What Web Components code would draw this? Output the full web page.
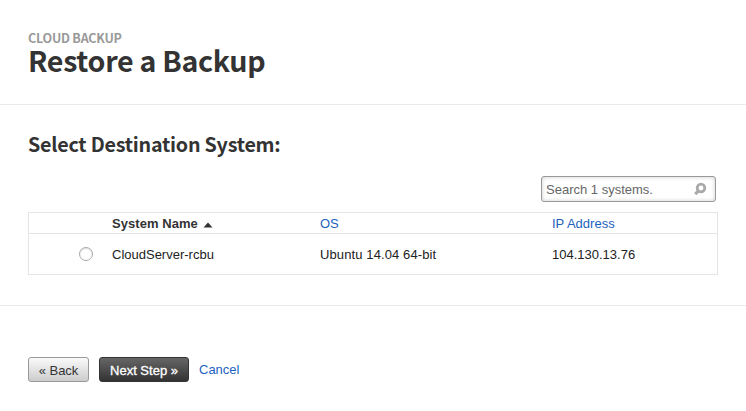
<!DOCTYPE html>
<html lang="en">
<head>
<meta charset="utf-8">
<title>Restore a Backup</title>
<style>
html,body{margin:0;background:#fff}
body{font:13px/16px "Liberation Sans",Arial,sans-serif;color:#222}
</style>
</head>
<body>
<restore-page></restore-page>
<script>
const define = (name, html) => customElements.define(name, class extends HTMLElement {
  constructor() {
    super();
    this.attachShadow({mode: 'open'}).innerHTML = html;
  }
});

define('page-header', `<style>
:host{display:block;box-sizing:border-box;height:105px;padding:30px 28px 0;border-bottom:1px solid #ebebeb;font-family:"Noto Sans CJK SC",sans-serif;font-weight:700;white-space:nowrap}
.section{font-size:12.5px;line-height:16px;height:16px;color:#999;letter-spacing:-.22px}
h1{margin:0;font-size:28.6px;line-height:28px;height:28px;color:#333;letter-spacing:-.3px}
</style><div class="section"><slot name="section"></slot></div><h1><slot></slot></h1>`);

define('section-title', `<style>
:host{display:block;margin-top:27px;height:25px;white-space:nowrap}
h2{margin:0;font:700 19.7px/24px "Noto Sans CJK SC",sans-serif;color:#333;letter-spacing:-.23px}
</style><h2><slot></slot></h2>`);

define('search-box', `<style>
:host{box-sizing:border-box;display:flex;align-items:center;justify-content:space-between;width:175px;height:26px;margin:19px 2px 10px auto;padding:0 8px 0 4px;border:1px solid #999;border-radius:3px;box-shadow:inset 0 0 4px #ccc;color:#666}
span{padding-top:2px}
svg{display:block}
</style><span><slot></slot></span>
<svg width="14" height="14" viewBox="0 0 14 14" fill="none" stroke="#aaa"><circle cx="8" cy="6" r="3.8" stroke-width="2.8"/><path d="M5.2 9.1 2.2 12.1" stroke-width="3.2"/></svg>`);

define('system-table', `<style>
:host{display:block;box-sizing:border-box;border:1px solid #e5e5e5;height:63px}
</style><slot></slot>`);

define('table-row', `<style>
:host{display:grid;grid-template-columns:83px 208px 232px 1fr;align-items:center;height:40px;white-space:nowrap}
:host([head]){height:20px;border-bottom:1px solid #e5e5e5}
</style><slot></slot>`);

define('table-cell', `<style>
:host{display:flex;align-items:center;line-height:16px;padding-top:2px}
:host([sorted]){font-weight:700;color:#333;letter-spacing:.05px}
:host([link]){color:#1d63be}
:host([wide]){letter-spacing:.11px}
svg{display:none;margin:1px 0 0 5px}
:host([sorted]) svg{display:block}
</style><span><slot></slot></span><svg width="10" height="6" viewBox="0 0 10 6"><path d="M.5 5.5 5 .5l4.5 5z" fill="#333"/></svg>`);

define('radio-mark', `<style>
:host{box-sizing:border-box;width:14px;height:14px;margin-left:50px;border:1px solid #aaa;border-radius:50%;background:#fff;box-shadow:inset 0 1px 1px #ddd}
</style>`);

define('form-actions', `<style>
:host{display:flex;align-items:flex-start;box-sizing:border-box;margin-top:30px;padding:51px 28px 0;border-top:1px solid #ebebeb;height:106px}
</style><slot></slot>`);

define('action-button', `<style>
:host{box-sizing:border-box;display:flex;align-items:center;justify-content:center;width:61px;height:25px;margin-right:10px;border:1px solid #999;border-radius:3px;background:linear-gradient(#fafafa,#ccc);color:#333;padding-top:3px;white-space:nowrap}
:host([primary]){width:90px;border-color:#333;background:linear-gradient(#666,#333);color:#fff;-webkit-text-stroke:.3px #fff}
</style><span><slot></slot></span>`);

define('text-link', `<style>
:host{display:block;color:#1d63be;padding-top:5px}
</style><slot></slot>`);

define('restore-page', `<style>
:host{display:block;height:411px;overflow:hidden}
main{padding:0 28px}
</style>
<page-header><span slot="section">CLOUD BACKUP</span>Restore a Backup</page-header>
<main>
<section-title>Select Destination System:</section-title>
<search-box>Search 1 systems.</search-box>
<system-table>
<table-row head><span></span><table-cell sorted>System Name</table-cell><table-cell link>OS</table-cell><table-cell link>IP Address</table-cell></table-row>
<table-row><radio-mark></radio-mark><table-cell>CloudServer-rcbu</table-cell><table-cell wide>Ubuntu 14.04 64-bit</table-cell><table-cell>104.130.13.76</table-cell></table-row>
</system-table>
</main>
<form-actions><action-button>« Back</action-button><action-button primary>Next Step »</action-button><text-link>Cancel</text-link></form-actions>
`);
</script>
</body>
</html>
